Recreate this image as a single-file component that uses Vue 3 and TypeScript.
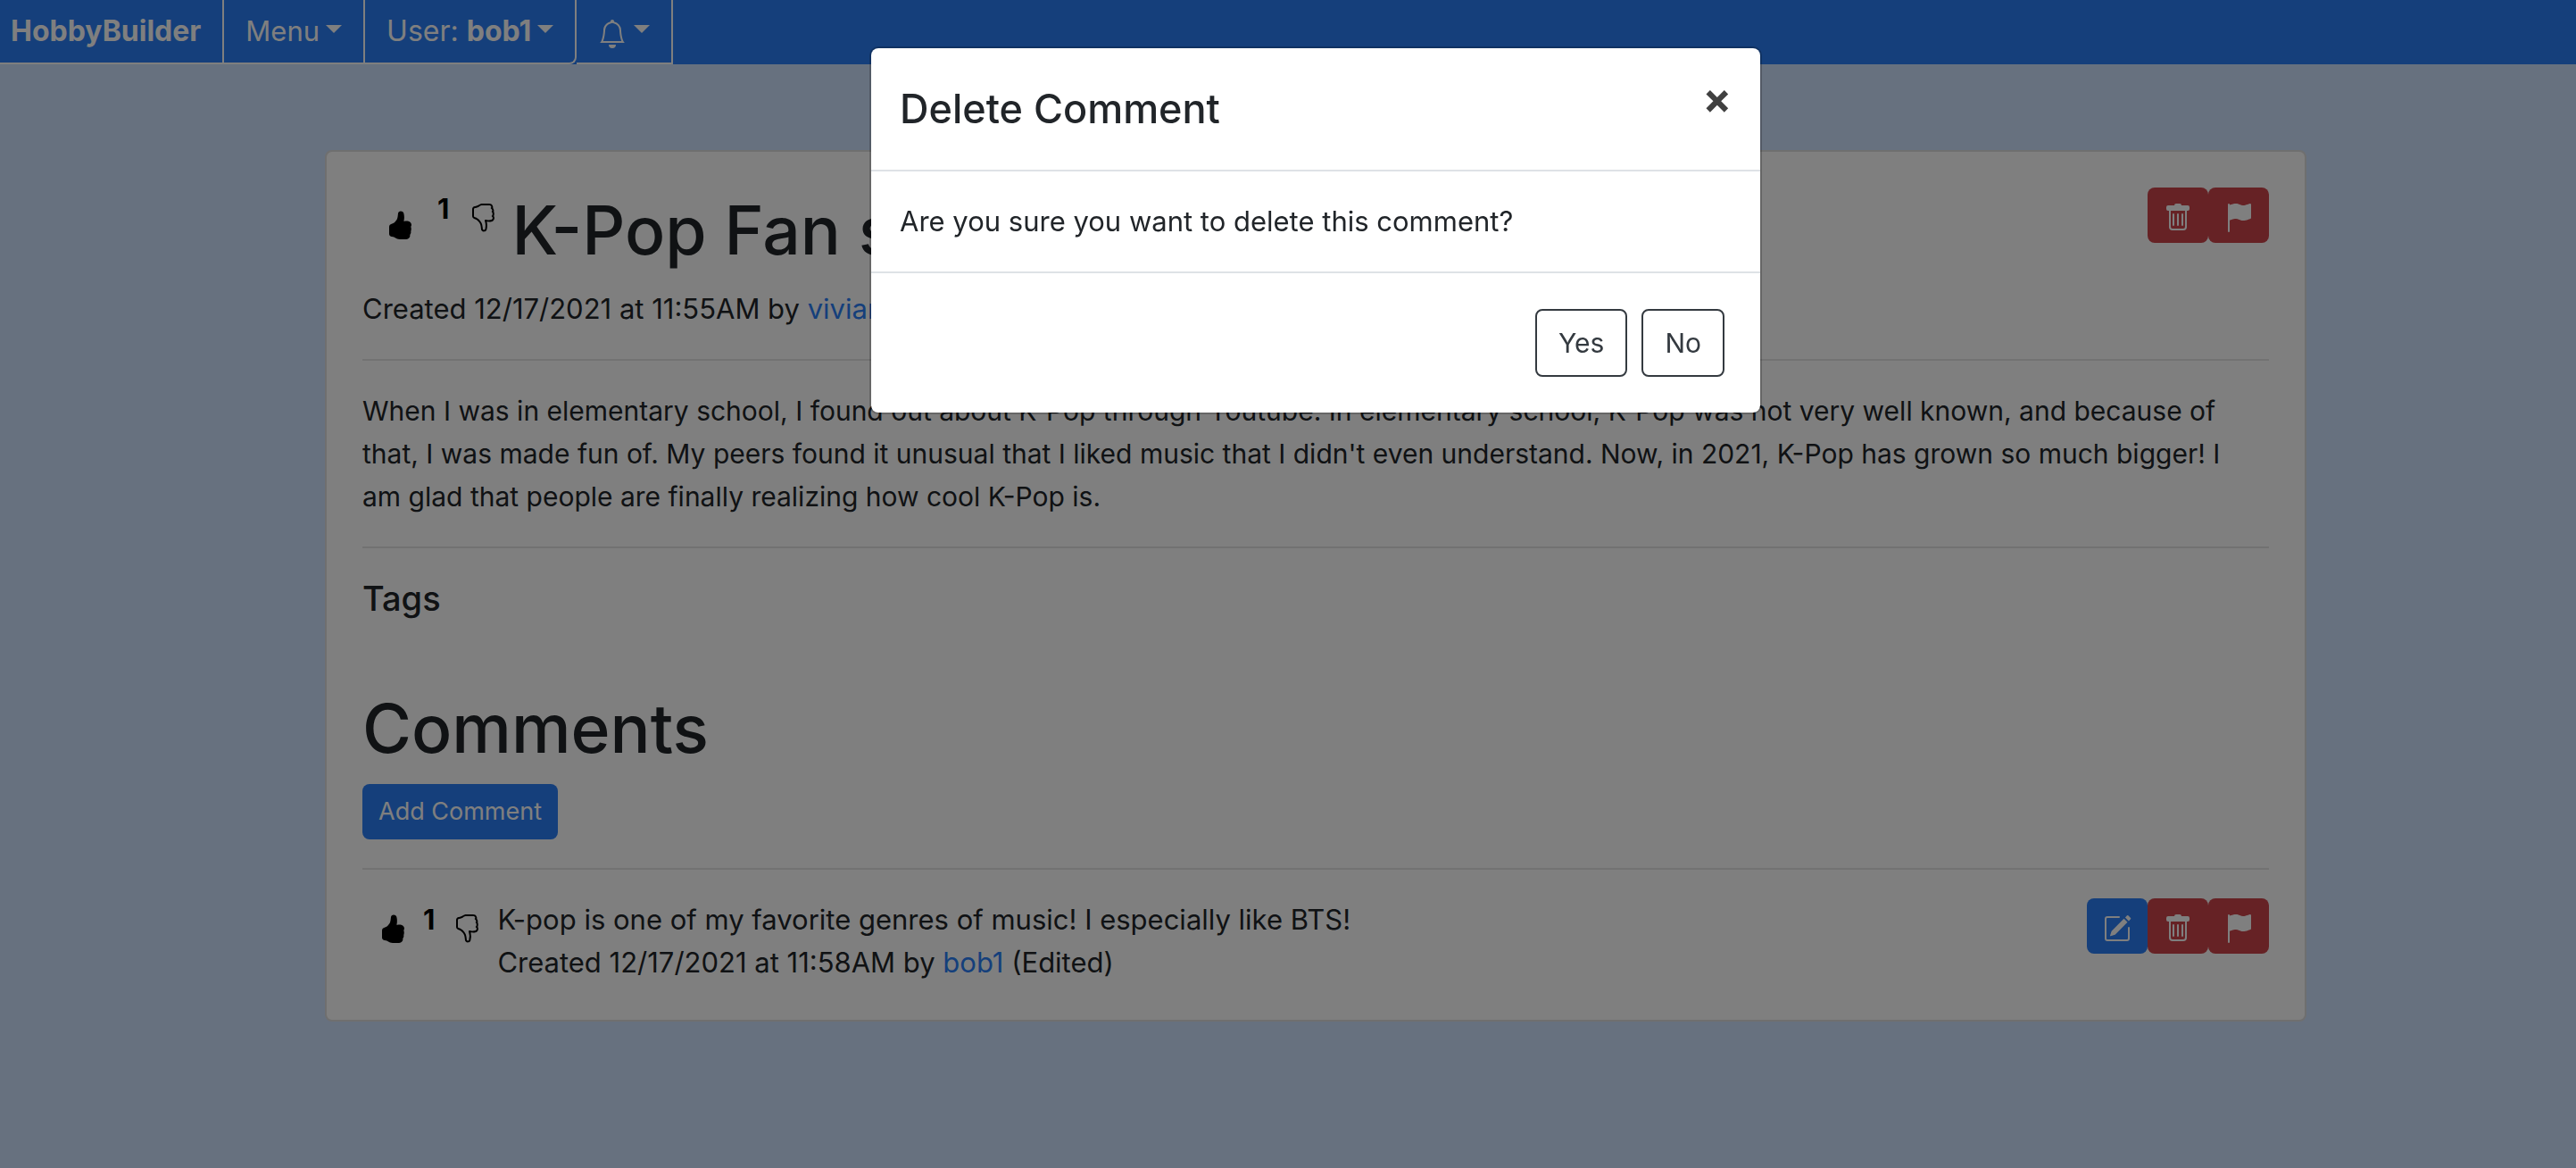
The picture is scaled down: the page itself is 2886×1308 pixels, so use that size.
<script setup lang="ts">
import { ref } from 'vue'

type IconName = 'up' | 'down' | 'bell' | 'trash' | 'flag' | 'edit'

const icons: Record<IconName, string[]> = {
  up: [
    'M6.956 1.745C7.021.81 7.908.087 8.864.325l.261.066c.463.116.874.456 1.012.965.22.816.533 2.511.062 4.51a9.84 9.84 0 0 1 .443-.051c.713-.065 1.669-.072 2.516.21.518.173.994.681 1.2 1.273.184.532.16 1.162-.234 1.733.058.119.103.242.138.363.077.27.113.567.113.856 0 .289-.036.586-.113.856-.039.135-.09.273-.16.404.169.387.107.819-.003 1.148a3.163 3.163 0 0 1-.488.901c.054.152.076.312.076.465 0 .305-.089.625-.253.912C13.1 15.522 12.437 16 11.5 16H8c-.605 0-1.07-.081-1.466-.218a4.82 4.82 0 0 1-.97-.484l-.048-.03c-.504-.307-.999-.609-2.068-.722C2.682 14.464 2 13.846 2 13V9c0-.85.685-1.432 1.357-1.615.849-.232 1.574-.787 2.132-1.41.56-.627.914-1.28 1.039-1.639.199-.575.356-1.539.428-2.59z',
  ],
  down: [
    'M8.864 15.674c-.956.24-1.843-.484-1.908-1.42-.072-1.05-.23-2.015-.428-2.59-.125-.36-.479-1.012-1.04-1.638-.557-.624-1.282-1.179-2.131-1.41C2.685 8.432 2 7.85 2 7V3c0-.845.682-1.464 1.448-1.546 1.07-.113 1.564-.415 2.068-.723l.048-.029c.272-.166.578-.349.97-.484C6.931.08 7.395 0 8 0h3.5c.937 0 1.599.478 1.934 1.064.164.287.254.607.254.913 0 .152-.023.312-.077.464.201.262.38.577.488.9.11.33.172.762.004 1.15.069.13.12.268.159.403.077.27.113.567.113.856 0 .289-.036.586-.113.856-.035.12-.08.244-.138.363.394.571.418 1.2.234 1.733-.206.592-.682 1.1-1.2 1.272-.847.283-1.803.276-2.516.211a9.877 9.877 0 0 1-.443-.05 9.364 9.364 0 0 1-.062 4.51c-.138.508-.55.848-1.012.964l-.261.065zM11.5 1H8c-.51 0-.863.068-1.14.163-.281.097-.506.229-.776.393l-.04.025c-.555.338-1.198.73-2.49.868-.333.035-.554.29-.554.55V7c0 .255.226.543.62.65 1.095.3 1.977.997 2.614 1.709.635.71 1.064 1.475 1.238 1.977.243.7.407 1.768.482 2.85.025.362.36.595.667.518l.262-.065c.16-.04.258-.144.288-.255a8.34 8.34 0 0 0-.145-4.726.5.5 0 0 1 .595-.643h.003l.014.004.058.013a8.912 8.912 0 0 0 1.036.157c.663.06 1.457.054 2.11-.163.175-.059.45-.301.57-.651.107-.308.087-.67-.266-1.021L12.793 7l.353-.354c.043-.042.105-.14.154-.315.048-.167.075-.37.075-.581 0-.211-.027-.414-.075-.581-.05-.174-.111-.273-.154-.315l-.353-.354.353-.354c.047-.047.109-.176.005-.488a2.224 2.224 0 0 0-.505-.804l-.353-.354.353-.354c.006-.005.041-.05.041-.17a.866.866 0 0 0-.121-.415C12.4 1.272 12.063 1 11.5 1z',
  ],
  bell: [
    'M8 16a2 2 0 0 0 2-2H6a2 2 0 0 0 2 2zM8 1.918l-.797.161A4.002 4.002 0 0 0 4 6c0 .628-.134 2.197-.459 3.742-.16.767-.376 1.566-.663 2.258h10.244c-.287-.692-.502-1.49-.663-2.258C12.134 8.197 12 6.628 12 6a4.002 4.002 0 0 0-3.203-3.92L8 1.917zM14.22 12c.223.447.481.801.78 1H1c.299-.199.557-.553.78-1C2.68 10.2 3 6.88 3 6c0-2.42 1.72-4.44 4.005-4.901a1 1 0 1 1 1.99 0A5.002 5.002 0 0 1 13 6c0 .88.32 4.2 1.22 6z',
  ],
  trash: [
    'M5.5 5.5A.5.5 0 0 1 6 6v6a.5.5 0 0 1-1 0V6a.5.5 0 0 1 .5-.5zm2.5 0a.5.5 0 0 1 .5.5v6a.5.5 0 0 1-1 0V6a.5.5 0 0 1 .5-.5zm3 .5a.5.5 0 0 0-1 0v6a.5.5 0 0 0 1 0V6z',
    'M14.5 3a1 1 0 0 1-1 1H13v9a2 2 0 0 1-2 2H5a2 2 0 0 1-2-2V4h-.5a1 1 0 0 1-1-1V2a1 1 0 0 1 1-1H6a1 1 0 0 1 1-1h2a1 1 0 0 1 1 1h3.5a1 1 0 0 1 1 1v1zM4.118 4 4 4.059V13a1 1 0 0 0 1 1h6a1 1 0 0 0 1-1V4.059L11.882 4H4.118zM2.5 3V2h11v1h-11z',
  ],
  flag: [
    'M14.778.085A.5.5 0 0 1 15 .5V8a.5.5 0 0 1-.314.464L14.5 8l.186.464-.003.001-.006.003-.023.009a12.435 12.435 0 0 1-.397.15c-.264.095-.631.223-1.047.35-.816.252-1.879.523-2.71.523-.847 0-1.548-.28-2.158-.525l-.028-.01C7.68 8.71 7.14 8.5 6.5 8.5c-.7 0-1.638.23-2.437.477A19.626 19.626 0 0 0 3 9.342V15.5a.5.5 0 0 1-1 0V.5a.5.5 0 0 1 1 0v.282c.226-.079.496-.17.79-.26C4.606.272 5.67 0 6.5 0c.84 0 1.524.277 2.121.519l.043.018C9.286.788 9.828 1 10.5 1c.7 0 1.638-.23 2.437-.477a19.587 19.587 0 0 0 1.349-.476l.019-.007.004-.002h.001',
  ],
  edit: [
    'M15.502 1.94a.5.5 0 0 1 0 .706L14.459 3.69l-2-2L13.502.646a.5.5 0 0 1 .707 0l1.293 1.293zm-1.75 2.456-2-2L4.939 9.21a.5.5 0 0 0-.121.196l-.805 2.414a.25.25 0 0 0 .316.316l2.414-.805a.5.5 0 0 0 .196-.12l6.813-6.814z',
    'M1 13.5A1.5 1.5 0 0 0 2.5 15h11a1.5 1.5 0 0 0 1.5-1.5v-6a.5.5 0 0 0-1 0v6a.5.5 0 0 1-.5.5h-11a.5.5 0 0 1-.5-.5v-11a.5.5 0 0 1 .5-.5H9a.5.5 0 0 0 0-1H2.5A1.5 1.5 0 0 0 1 2.5v11z',
  ],
}

const postActions: { icon: IconName; label: string; kind: string }[] = [
  { icon: 'trash', label: 'Delete post', kind: 'danger' },
  { icon: 'flag', label: 'Report post', kind: 'danger' },
]
const commentActions: { icon: IconName; label: string; kind: string }[] = [
  { icon: 'edit', label: 'Edit comment', kind: 'primary' },
  { icon: 'trash', label: 'Delete comment', kind: 'danger' },
  { icon: 'flag', label: 'Report comment', kind: 'danger' },
]

const confirming = ref(true)
</script>

<template>
  <div class="page">
    <nav class="navbar">
      <a class="brand" href="#">HobbyBuilder</a>
      <button class="nav-item" type="button">Menu<span class="caret"></span></button>
      <button class="nav-item user" type="button">
        <span>User: <b>bob1</b></span><span class="caret"></span>
      </button>
      <button class="nav-item alerts" type="button" aria-label="Notifications">
        <svg class="icon" viewBox="0 0 16 16" aria-hidden="true"><path v-for="d in icons.bell" :key="d" :d="d" /></svg>
        <span class="caret"></span>
      </button>
    </nav>

    <main class="content">
      <article class="card">
        <header class="post-head">
          <div class="votes post-votes">
            <button class="vote up" type="button" aria-label="Like post">
              <svg class="icon" viewBox="0 0 16 16" aria-hidden="true"><path v-for="d in icons.up" :key="d" :d="d" /></svg>
            </button>
            <b class="score">1</b>
            <button class="vote" type="button" aria-label="Dislike post">
              <svg class="icon" viewBox="0 0 16 16" aria-hidden="true"><path v-for="d in icons.down" :key="d" :d="d" /></svg>
            </button>
          </div>
          <h1 class="title">K-Pop Fan s</h1>
          <div class="actions">
            <button v-for="a in postActions" :key="a.icon" type="button" :class="['btn', a.kind]" :aria-label="a.label">
              <svg class="icon" viewBox="0 0 16 16" aria-hidden="true"><path v-for="d in icons[a.icon]" :key="d" :d="d" /></svg>
            </button>
          </div>
        </header>
        <p class="byline">Created 12/17/2021 at 11:55AM by <a href="#">vivian</a></p>
        <hr />
        <p class="prose">
          When I was in elementary school, I found out about K-Pop through Youtube. In elementary school, K-Pop was not
          very well known, and because of that, I was made fun of. My peers found it unusual that I liked music that I
          didn't even understand. Now, in 2021, K-Pop has grown so much bigger! I am glad that people are finally
          realizing how cool K-Pop is.
        </p>
        <hr />
        <h2 class="tags">Tags</h2>
        <h1 class="title comments-title">Comments</h1>
        <button class="btn primary add" type="button">Add Comment</button>
        <hr />
        <section class="comment">
          <div class="votes">
            <button class="vote up" type="button" aria-label="Like comment">
              <svg class="icon" viewBox="0 0 16 16" aria-hidden="true"><path v-for="d in icons.up" :key="d" :d="d" /></svg>
            </button>
            <b class="score">1</b>
            <button class="vote" type="button" aria-label="Dislike comment">
              <svg class="icon" viewBox="0 0 16 16" aria-hidden="true"><path v-for="d in icons.down" :key="d" :d="d" /></svg>
            </button>
          </div>
          <div class="comment-body">
            <p>K-pop is one of my favorite genres of music! I especially like BTS!</p>
            <p>Created 12/17/2021 at 11:58AM by <a href="#">bob1</a> (Edited)</p>
          </div>
          <div class="actions">
            <button v-for="a in commentActions" :key="a.icon" type="button" :class="['btn', a.kind]" :aria-label="a.label">
              <svg class="icon" viewBox="0 0 16 16" aria-hidden="true"><path v-for="d in icons[a.icon]" :key="d" :d="d" /></svg>
            </button>
          </div>
        </section>
      </article>
    </main>

    <div v-if="confirming" class="backdrop">
      <div class="modal" role="dialog" aria-modal="true" aria-labelledby="confirm-title">
        <header class="modal-head">
          <h2 id="confirm-title">Delete Comment</h2>
          <button class="close" type="button" aria-label="Close" @click="confirming = false">×</button>
        </header>
        <p class="modal-body">Are you sure you want to delete this comment?</p>
        <footer class="modal-foot">
          <button class="choice" type="button" @click="confirming = false">Yes</button>
          <button class="choice" type="button" @click="confirming = false">No</button>
        </footer>
      </div>
    </div>
  </div>
</template>

<style>
body {
  margin: 0;
  background: #cfe2ff;
}
</style>

<style scoped>
.page {
  --blue: #2a7ef6;
  --red: #cc444b;
  --gutter: 62px;
  min-height: 100vh;
  font: 400 31px/48px Inter, 'Liberation Sans', sans-serif;
  color: #212529;
}
.page *,
.page *::before {
  box-sizing: border-box;
}
button {
  font: inherit;
  color: inherit;
  background: none;
  border: 0;
  padding: 0;
  cursor: pointer;
}
p,
h1,
h2 {
  margin: 0;
}
a {
  color: var(--blue);
  text-decoration: none;
}
hr {
  margin: 32px 0;
  border: 0;
  border-top: 2px solid rgba(0, 0, 0, 0.1);
}
.icon {
  display: block;
  width: 32px;
  height: 32px;
  fill: currentColor;
}

/* Navigation */
.navbar {
  display: flex;
  height: 72px;
  background: var(--blue);
}
.brand,
.nav-item {
  display: flex;
  align-items: center;
  border-right: 2px solid #fff;
  border-bottom: 2px solid #fff;
  color: #fff;
}
.brand {
  padding: 0 24px 0 12px;
  font-size: 32px;
  font-weight: 700;
}
.nav-item {
  gap: 7px;
  padding: 0 24px;
}
.nav-item .icon {
  margin-top: 6px;
}
.user {
  border-bottom-right-radius: 8px;
  font-size: 32px;
}
.alerts {
  gap: 8px;
}
.caret {
  border: 9px solid transparent;
  border-top-color: #fff;
  border-bottom: 0;
  margin-bottom: 6px;
}

/* Post */
.content {
  padding: 96px 0 96px var(--gutter);
}
.card {
  max-width: 2220px;
  margin: 0 auto;
  padding: 40px;
  background: #fff;
  border: 2px solid rgba(0, 0, 0, 0.125);
  border-radius: 8px;
}
.post-head {
  display: flex;
  align-items: flex-start;
  margin-bottom: 16px;
}
.title {
  font-size: 75px;
  line-height: 96px;
  font-weight: 500;
}
.comments-title {
  margin: 74px 0 14px;
}
.tags {
  font-size: 38px;
  line-height: 48px;
  font-weight: 500;
}
.prose {
  padding-right: 16px;
  font-size: 30px;
}
.votes {
  display: flex;
  align-items: flex-start;
  padding: 0 18px;
  color: #000;
}
.vote {
  margin-top: 18px;
}
.score {
  margin: 0 20px 0 18px;
}
.post-votes {
  padding: 0 16px 0 26px;
}
.post-votes .up {
  margin-top: 26px;
}
.post-votes .score {
  margin: 0 22px 0 26px;
}
.actions {
  display: flex;
  margin-left: auto;
}
.btn {
  height: 62px;
  padding: 0 18px;
  border-radius: 8px;
  color: #fff;
  font-size: 27px;
}
.btn .icon {
  margin-top: 6px;
}
.primary {
  background: var(--blue);
}
.danger {
  background: var(--red);
}
.add {
  display: block;
}
.comment {
  display: flex;
  align-items: flex-start;
}

/* Confirmation dialog */
.backdrop {
  position: fixed;
  inset: 0;
  display: flex;
  justify-content: center;
  align-items: flex-start;
  padding: 52px 0 0 var(--gutter);
  background: rgba(0, 0, 0, 0.5);
}
.modal {
  width: 1000px;
  background: #fff;
  background-clip: padding-box;
  border: 2px solid rgba(0, 0, 0, 0.2);
  border-radius: 10px;
}
.modal-head {
  display: flex;
  justify-content: space-between;
  align-items: flex-start;
  padding: 32px;
  border-bottom: 2px solid #dee2e6;
}
.modal-head h2 {
  font-size: 45px;
  line-height: 72px;
  font-weight: 500;
}
.close {
  font-size: 48px;
  line-height: 48px;
  font-weight: 700;
  color: #404040;
}
.modal-body {
  padding: 32px;
}
.modal-foot {
  display: flex;
  justify-content: flex-end;
  gap: 16px;
  padding: 40px;
  border-top: 2px solid #dee2e6;
}
.choice {
  height: 76px;
  padding: 0 24px;
  border: 2px solid #343a40;
  border-radius: 8px;
  color: #343a40;
  font-size: 30px;
}
</style>
